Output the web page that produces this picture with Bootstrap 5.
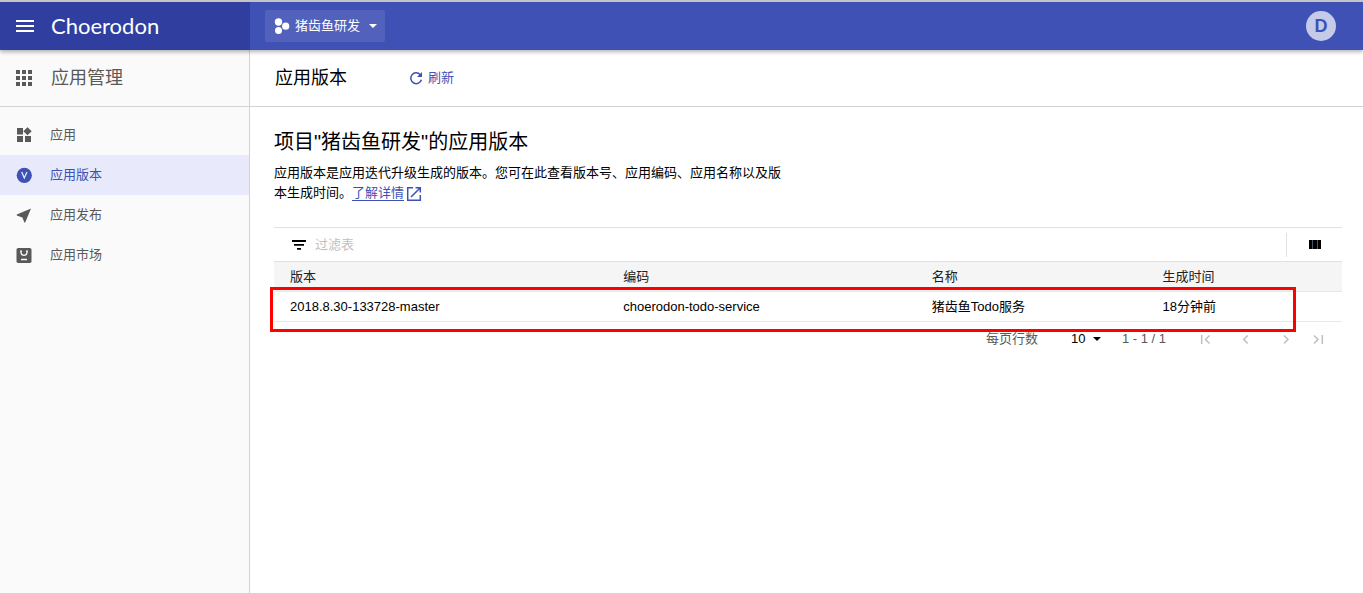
<!DOCTYPE html>
<html lang="zh-CN">
<head>
<meta charset="utf-8">
<meta name="viewport" content="width=device-width, initial-scale=1">
<title>应用版本 - Choerodon</title>
<link href="https://cdn.jsdelivr.net/npm/bootstrap@5.3.0/dist/css/bootstrap.min.css" rel="stylesheet">
<style>
  :root { --brand: #3f51b5; --brand-dark: #303f9f; --line: #d3d3d3; --soft-line: #e0e0e0; --side: 250px; }
  body { font-family: "Liberation Sans", "Noto Sans CJK SC", sans-serif; font-size: 13px; line-height: 20px; color: #000; background: #fff; }
  svg { display: block; flex: none; }
  .topbar { height: 50px; background: var(--brand); border-top: 2px solid #c4c4c8; box-shadow: 0 2px 4px rgba(0,0,0,.3); z-index: 2; color: #fff; }
  .brand-area { width: var(--side); flex: none; background: var(--brand-dark); padding-left: 16px; }
  .logo-text { font-family: "Lato", sans-serif; font-size: 22px; line-height: 28px; color: #fff; text-decoration: none; margin-left: 17px; }
  .context-area { padding-left: 15px; }
  .project-btn { --bs-btn-color: #fff; --bs-btn-hover-color: #fff; --bs-btn-active-color: #fff; background: rgba(255,255,255,.1); height: 32px; width: 120px; border: 0; border-radius: 2px; font-size: 13px; line-height: 20px; }
  .avatar { width: 30px; height: 30px; background: #c5cae9; color: var(--brand); font-weight: 700; font-size: 18px; border: 0; margin-right: 27px; }
  .sidebar { width: var(--side); flex: none; background: #fafafa; border-right: 1px solid var(--line); color: #595959; }
  .bar-row { height: 57px; border-bottom: 1px solid var(--line); }
  .side-head { gap: 18px; }
  .title-text { font-size: 18px; line-height: 26px; font-weight: 400; margin: 0; }
  .menu-link { display: flex; align-items: center; height: 40px; padding: 0 16px; gap: 18px; color: #595959; text-decoration: none; }
  .menu-link.active { background: #e8eafc; color: var(--brand); }
  .main-head { padding-left: 25px; }
  .refresh-btn { color: var(--brand); font-size: 13px; line-height: 20px; border: 0; margin-left: 61px; }
  .page-body { padding: 20px 21px 0 24px; }
  .page-title { font-size: 20px; line-height: 30px; font-weight: 400; margin-bottom: 6px; }
  .intro { max-width: 516px; }
  .intro a { color: var(--brand); text-decoration: none; }
  .intro a span { text-decoration: underline; text-decoration-thickness: 1px; text-underline-offset: 3px; }
  .intro a svg { display: inline-block; vertical-align: -5px; margin-left: 2px; }
  .filter-bar { height: 35px; border-top: 1px solid var(--soft-line); border-bottom: 1px solid var(--soft-line); padding-left: 16px; }
  .filter-bar input { border: 0; outline: 0; background: transparent; font-size: 13px; line-height: 20px; padding: 0; }
  .filter-bar input::placeholder { color: #bfbfbf; opacity: 1; }
  .column-btn { width: 56px; height: 24px; border: 0; border-left: 1px solid var(--soft-line); border-radius: 0; }
  .version-table { table-layout: fixed; border-collapse: separate; border-spacing: 0; margin: 0; }
  .version-table thead, .version-table tbody, .version-table tr { border-width: 0; }
  .version-table th, .version-table td { height: 30px; padding: 0 16px; border-width: 0 0 1px; border-bottom: 1px solid #e8e8e8; vertical-align: middle; color: #000; }
  .version-table th { background: #f5f5f5; font-weight: 400; color: #212121; }
  .c-version { width: 31.2%; } .c-code { width: 28.9%; } .c-name { width: 21.6%; }
  .highlight-frame { position: absolute; left: -4px; right: 46px; bottom: -10px; height: 45px; border: 3px solid #f00; pointer-events: none; }
  .pager { padding: 7px 16px 0 0; color: #595959; }
  .pager select { appearance: none; border: 0; background: transparent; font-size: 13px; line-height: 20px; padding: 0; width: 30px; color: #000; }
  .size-box { margin: 0 21px 0 33px; position: relative; }
  .size-box svg { position: absolute; right: 0; top: 8px; pointer-events: none; }
  .pager button { border: 0; padding: 0; color: #bfbfbf; }
</style>
</head>
<body class="d-flex flex-column min-vh-100">
<header class="topbar d-flex position-relative">
  <div class="brand-area d-flex align-items-center">
    <button class="btn p-0 border-0" type="button" aria-label="菜单">
      <svg width="18" height="12" viewBox="0 0 18 12" fill="#fff"><path d="M0 0h18v2H0zM0 5h18v2H0zM0 10h18v2H0z"/></svg>
    </button>
    <a class="logo-text" href="#">Choerodon</a>
  </div>
  <div class="context-area d-flex flex-grow-1 align-items-center justify-content-between">
    <button class="btn project-btn d-flex align-items-center p-2" type="button">
      <svg width="18" height="16" viewBox="0 0 18 16" fill="#fff"><circle cx="5.500" cy="4" r="3.700"/><circle cx="5.500" cy="12.400" r="3.500"/><circle cx="12.700" cy="8.200" r="3.600"/></svg>
      <span class="ms-1">猪齿鱼研发</span>
      <svg class="ms-auto" width="8" height="4" viewBox="0 0 8 4" fill="#fff"><path d="M0 0h8L4 4z"/></svg>
    </button>
    <button class="avatar rounded-circle d-flex align-items-center justify-content-center p-0" type="button">D</button>
  </div>
</header>
<div class="d-flex flex-grow-1">
  <aside class="sidebar">
    <div class="bar-row side-head d-flex align-items-center px-3">
      <svg width="17" height="17" viewBox="0 0 17 17" fill="currentColor"><path d="M0 0h4v4H0zM6 0h4v4H6zM12 0h4v4h-4zM0 6h4v4H0zM6 6h4v4H6zM12 6h4v4h-4zM0 12h4v4H0zM6 12h4v4H6zM12 12h4v4h-4z"/></svg>
      <h2 class="title-text">应用管理</h2>
    </div>
    <nav class="pt-2">
      <a class="menu-link" href="#">
        <svg width="16" height="16" viewBox="0 0 16 16" fill="currentColor"><path d="M1 1h6v6.500H1zM1 9h6v6H1zM9 9h6v6H9zM11.500.300l4.200 4-4.200 4-4.200-4z"/></svg>
        <span>应用</span></a>
      <a class="menu-link active" href="#" aria-current="page">
        <svg width="16" height="16" viewBox="0 0 16 16"><circle cx="8.300" cy="8.300" r="7.600" fill="currentColor"/><path d="M5.700 5l2.600 6L11 5" fill="none" stroke="#e8eafc" stroke-width="1.300"/></svg>
        <span>应用版本</span></a>
      <a class="menu-link" href="#">
        <svg width="16" height="16" viewBox="0 0 16 16" fill="currentColor"><path d="M15 1.500L.800 7.500v1l5.600 2L8.400 15.500h.8z"/></svg>
        <span>应用发布</span></a>
      <a class="menu-link" href="#">
        <svg width="16" height="16" viewBox="0 0 16 16"><rect x=".5" y="1" width="15" height="15" rx="1.700" fill="currentColor"/><path d="M5 4v1.300a3 3 0 0 0 6 0V4M4 4.200h2M10 4.200h2M5 12.500h6" fill="none" stroke="#fafafa" stroke-width="1.300"/></svg>
        <span>应用市场</span></a>
    </nav>
  </aside>
  <main class="flex-grow-1">
    <div class="bar-row main-head d-flex align-items-center">
      <h1 class="title-text">应用版本</h1>
      <button class="btn refresh-btn d-flex align-items-center p-0" type="button">
        <svg width="16" height="16" viewBox="0 0 16 16" fill="none" stroke="currentColor" stroke-width="1.500"><path d="M12.300 4.700a5.400 5.400 0 1 0 1.100 5"/><path d="M14 2v5H9z" fill="currentColor" stroke="none"/></svg>
        <span class="ms-1">刷新</span>
      </button>
    </div>
    <div class="page-body">
      <h2 class="page-title">项目"猪齿鱼研发"的应用版本</h2>
      <p class="intro mb-4">应用版本是应用迭代升级生成的版本。您可在此查看版本号、应用编码、应用名称以及版本生成时间。<a href="#"><span>了解详情</span><svg width="16" height="16" viewBox="0 0 16 16" fill="none" stroke="currentColor" stroke-width="1.500"><path d="M7 1.700H1.700v12.600h12.600V9M9.500 1.700h4.800v4.800M14.300 1.700L5 11"/></svg></a></p>
      <section>
        <div class="filter-bar d-flex align-items-center">
          <svg width="17" height="16" viewBox="0 0 17 16" fill="#000"><path d="M2 3h14v2H2zM4 7h10v1.700H4zM7 11h4v1.700H7z"/></svg>
          <input class="ms-2 flex-grow-1" type="text" placeholder="过滤表" aria-label="过滤表">
          <button class="btn column-btn p-0 d-flex align-items-center justify-content-center" type="button" aria-label="列设置">
            <svg width="12" height="9" viewBox="0 0 12 9"><path d="M0 0h3v9H0zM4 0h4v9H4zM9 0h3v9H9z" fill="#000"/><path d="M3 0h1v9H3zM8 0h1v9H8z" fill="#456"/></svg>
          </button>
        </div>
        <div class="position-relative">
          <table class="table version-table">
            <thead><tr><th class="c-version" scope="col">版本</th><th class="c-code" scope="col">编码</th><th class="c-name" scope="col">名称</th><th scope="col">生成时间</th></tr></thead>
            <tbody><tr><td>2018.8.30-133728-master</td><td>choerodon-todo-service</td><td>猪齿鱼Todo服务</td><td>18分钟前</td></tr></tbody>
          </table>
          <div class="highlight-frame"></div>
        </div>
        <div class="pager d-flex align-items-center justify-content-end">
          <label for="pageSize">每页行数</label>
          <div class="size-box">
            <select id="pageSize"><option>10</option></select>
            <svg width="8" height="4" viewBox="0 0 8 4"><path d="M0 0h8L4 4z"/></svg>
          </div>
          <span>1 - 1 / 1</span>
          <div class="d-flex ms-4 ps-2">
            <button class="btn me-4" type="button" aria-label="首页"><svg width="16" height="16" viewBox="0 0 16 16" fill="none" stroke="currentColor" stroke-width="1.500"><path d="M3.700 4v9M11.500 4.500l-4 4 4 4"/></svg></button>
            <button class="btn me-4" type="button" aria-label="上一页"><svg width="16" height="16" viewBox="0 0 16 16" fill="none" stroke="currentColor" stroke-width="1.500"><path d="M9.700 4.500l-4 4 4 4"/></svg></button>
            <button class="btn me-3" type="button" aria-label="下一页"><svg width="16" height="16" viewBox="0 0 16 16" fill="none" stroke="currentColor" stroke-width="1.500"><path d="M6 4.500l4 4-4 4"/></svg></button>
            <button class="btn" type="button" aria-label="末页"><svg width="16" height="16" viewBox="0 0 16 16" fill="none" stroke="currentColor" stroke-width="1.500"><path d="M4 4.500l4 4-4 4M12.300 4v9"/></svg></button>
          </div>
        </div>
      </section>
    </div>
  </main>
</div>
<script src="https://cdn.jsdelivr.net/npm/bootstrap@5.3.0/dist/js/bootstrap.bundle.min.js"></script>
</body>
</html>
